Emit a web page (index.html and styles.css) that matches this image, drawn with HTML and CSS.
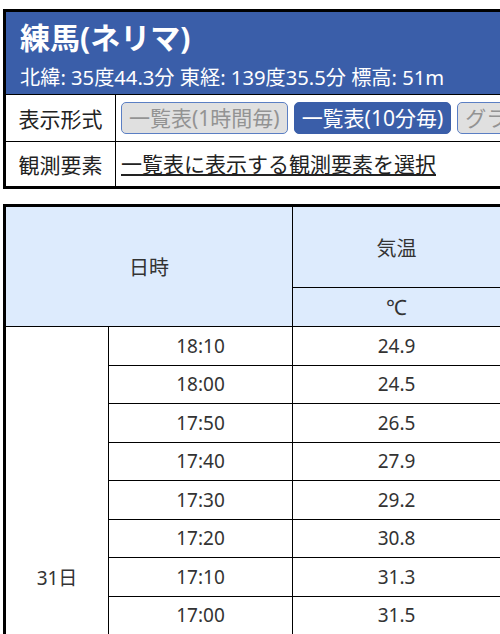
FILE: index.html
```html
<!DOCTYPE html>
<html lang="ja">
<head>
<meta charset="utf-8">
<title>練馬(ネリマ)</title>
<link rel="stylesheet" href="styles.css">
</head>
<body>
<div class="page">
  <section class="station">
    <header class="station-head">
      <h1 class="station-name">練馬(ネリマ)</h1>
      <p class="station-meta">北緯: 35度44.3分 東経: 139度35.5分 標高: 51m</p>
    </header>
    <div class="opt-row">
      <div class="opt-label">表示形式</div>
      <div class="opt-body">
        <button class="btn">一覧表(1時間毎)</button>
        <button class="btn btn-active">一覧表(10分毎)</button>
        <button class="btn">グラフ(1時間毎)</button>
        <button class="btn">グラフ(10分毎)</button>
      </div>
    </div>
    <div class="opt-row">
      <div class="opt-label">観測要素</div>
      <div class="opt-body">
        <a class="opt-link" href="#">一覧表に表示する観測要素を選択</a>
      </div>
    </div>
  </section>

  <table class="data">
    <thead>
      <tr class="h1">
        <th colspan="2" rowspan="2" class="c-dt">日時</th>
        <th class="c-val">気温</th>
        <th class="c-val">降水量</th>
      </tr>
      <tr class="h2">
        <th>℃</th>
        <th>mm</th>
      </tr>
    </thead>
    <tbody>
      <tr><td rowspan="13" class="c-day">31日</td><td class="c-time">18:10</td><td>24.9</td><td>0.0</td></tr>
      <tr><td class="c-time">18:00</td><td>24.5</td><td>0.0</td></tr>
      <tr><td class="c-time">17:50</td><td>26.5</td><td>0.0</td></tr>
      <tr><td class="c-time">17:40</td><td>27.9</td><td>0.0</td></tr>
      <tr><td class="c-time">17:30</td><td>29.2</td><td>0.0</td></tr>
      <tr><td class="c-time">17:20</td><td>30.8</td><td>0.0</td></tr>
      <tr><td class="c-time">17:10</td><td>31.3</td><td>0.0</td></tr>
      <tr><td class="c-time">17:00</td><td>31.5</td><td>0.0</td></tr>
      <tr><td class="c-time">16:50</td><td>31.8</td><td>0.0</td></tr>
      <tr><td class="c-time">16:40</td><td>32.0</td><td>0.0</td></tr>
      <tr><td class="c-time">16:30</td><td>32.2</td><td>0.0</td></tr>
      <tr><td class="c-time">16:20</td><td>32.4</td><td>0.0</td></tr>
      <tr><td class="c-time">16:10</td><td>32.6</td><td>0.0</td></tr>
    </tbody>
  </table>
</div>
</body>
</html>
```

FILE: styles.css
```css
html {
  overflow: hidden;
}
body {
  margin: 0;
  font-family: "Noto Sans", "Noto Sans CJK JP", sans-serif;
  color: #333;
  background: #fff;
}
.page {
  padding: 9px 0 0 3px;
  width: 900px;
}

/* station box */
.station {
  width: 860px;
  border: 3px solid #000;
}
.station-head {
  background: #3a5ea9;
  color: #fff;
  padding: 6px 14px 2px;
  border-bottom: 1px solid #000;
}
.station-name {
  margin: 0;
  font-size: 30px;
  font-weight: bold;
  line-height: 40px;
}
.station-meta {
  margin: 4px 0 0;
  font-size: 20.2px;
  line-height: 30px;
}
.opt-row {
  display: flex;
  border-bottom: 1px solid #000;
}
.opt-row:last-child {
  border-bottom: 0;
}
.opt-label {
  box-sizing: border-box;
  width: 110px;
  flex: none;
  border-right: 1px solid #000;
  display: flex;
  align-items: center;
  justify-content: center;
  font-size: 21px;
  color: #222;
}
.opt-body {
  display: flex;
  align-items: center;
  gap: 6px;
  padding: 7px 5px;
}
.btn {
  box-sizing: border-box;
  height: 32px;
  padding: 0 7px;
  border: 1px solid #5b7fc4;
  border-radius: 5px;
  background: #e0e0e0;
  color: #939393;
  font-family: inherit;
  font-size: 21px;
  line-height: 30px;
  white-space: nowrap;
}
.btn-active {
  background: #3a5ea9;
  border-color: #3a5ea9;
  color: #fff;
}
.opt-link {
  font-size: 21px;
  line-height: 30px;
  color: #222;
  text-decoration: underline;
}

/* data table */
.data {
  margin-top: 15px;
  border-collapse: separate;
  border-spacing: 0;
  border-top: 3px solid #000;
  border-left: 3px solid #000;
  font-size: 19px;
  color: #333;
}
.data th,
.data td {
  border-right: 1px solid #000;
  border-bottom: 1px solid #000;
  text-align: center;
  font-weight: normal;
  padding: 0;
}
.data th {
  background: #ddebfd;
}
.h1 th {
  height: 80px;
  font-size: 20px;
}
.h2 th {
  height: 38px;
  font-size: 21px;
}
.c-dt {
  font-size: 20px;
}
.c-val {
  width: 207px;
}
.data td {
  height: 37.5px;
}
.c-day {
  width: 102px;
}
.c-time {
  width: 183px;
}
```
